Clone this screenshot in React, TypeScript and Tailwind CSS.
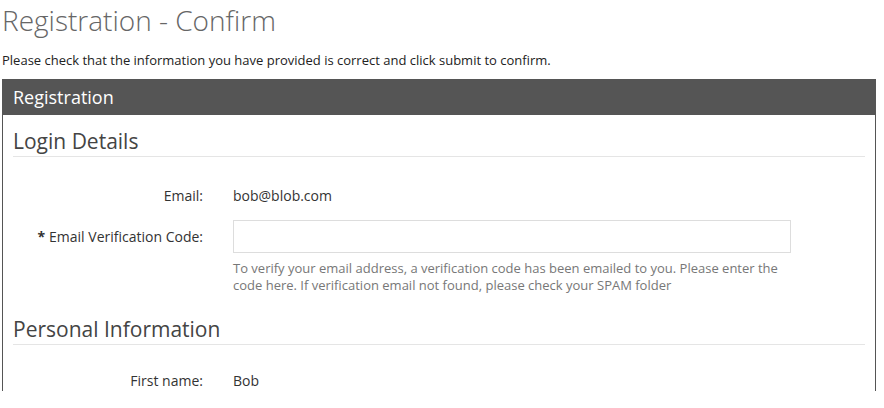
export default function App() {
  return (
    <div className="min-h-screen bg-white px-[2px] font-['Open_Sans',sans-serif] text-[#333]">
      <h1 className="pt-[2px] text-[28px] font-light leading-[36px] text-[#666]">Registration - Confirm</h1>
      <p className="mt-[14px] text-[13px] leading-[17px] text-[#222]">
        Please check that the information you have provided is correct and click submit to confirm.
      </p>

      <div className="mt-[10px] mr-[6px] border-x border-[#555]">
        {/* Panel header */}
        <div className="flex h-[36px] items-center bg-[#555] px-[10px] text-[18px] text-white">Registration</div>

        <div className="px-[10px]">
          {/* Login Details */}
          <h2 className="mt-[14px] border-b border-[#e5e5e5] pb-[2px] text-[21px] leading-[25px] text-[#444]">
            Login Details
          </h2>

          <div className="mt-[28px] flex items-center gap-[30px] text-[14px]">
            <div className="w-[190px] text-right">Email:</div>
            <div>bob@blob.com</div>
          </div>

          <div className="mt-[14px] flex gap-[30px] text-[14px]">
            <div className="flex h-[33px] w-[190px] items-center justify-end">
              <span className="mr-[4px] font-bold">*</span>Email Verification Code:
            </div>
            <div>
              <input type="text" className="h-[33px] w-[558px] border border-[#ddd] bg-white outline-none" />
              <p className="mt-[7px] w-[560px] text-[13px] leading-[17px] text-[#777]">
                To verify your email address, a verification code has been emailed to you. Please enter the code
                here. If verification email not found, please check your SPAM folder
              </p>
            </div>
          </div>

          {/* Personal Information */}
          <h2 className="mt-[23px] border-b border-[#e5e5e5] pb-[2px] text-[21px] leading-[25px] text-[#444]">
            Personal Information
          </h2>

          <div className="mt-[25px] flex items-center gap-[30px] text-[14px]">
            <div className="w-[190px] text-right">First name:</div>
            <div>Bob</div>
          </div>
        </div>
      </div>
    </div>
  );
}
